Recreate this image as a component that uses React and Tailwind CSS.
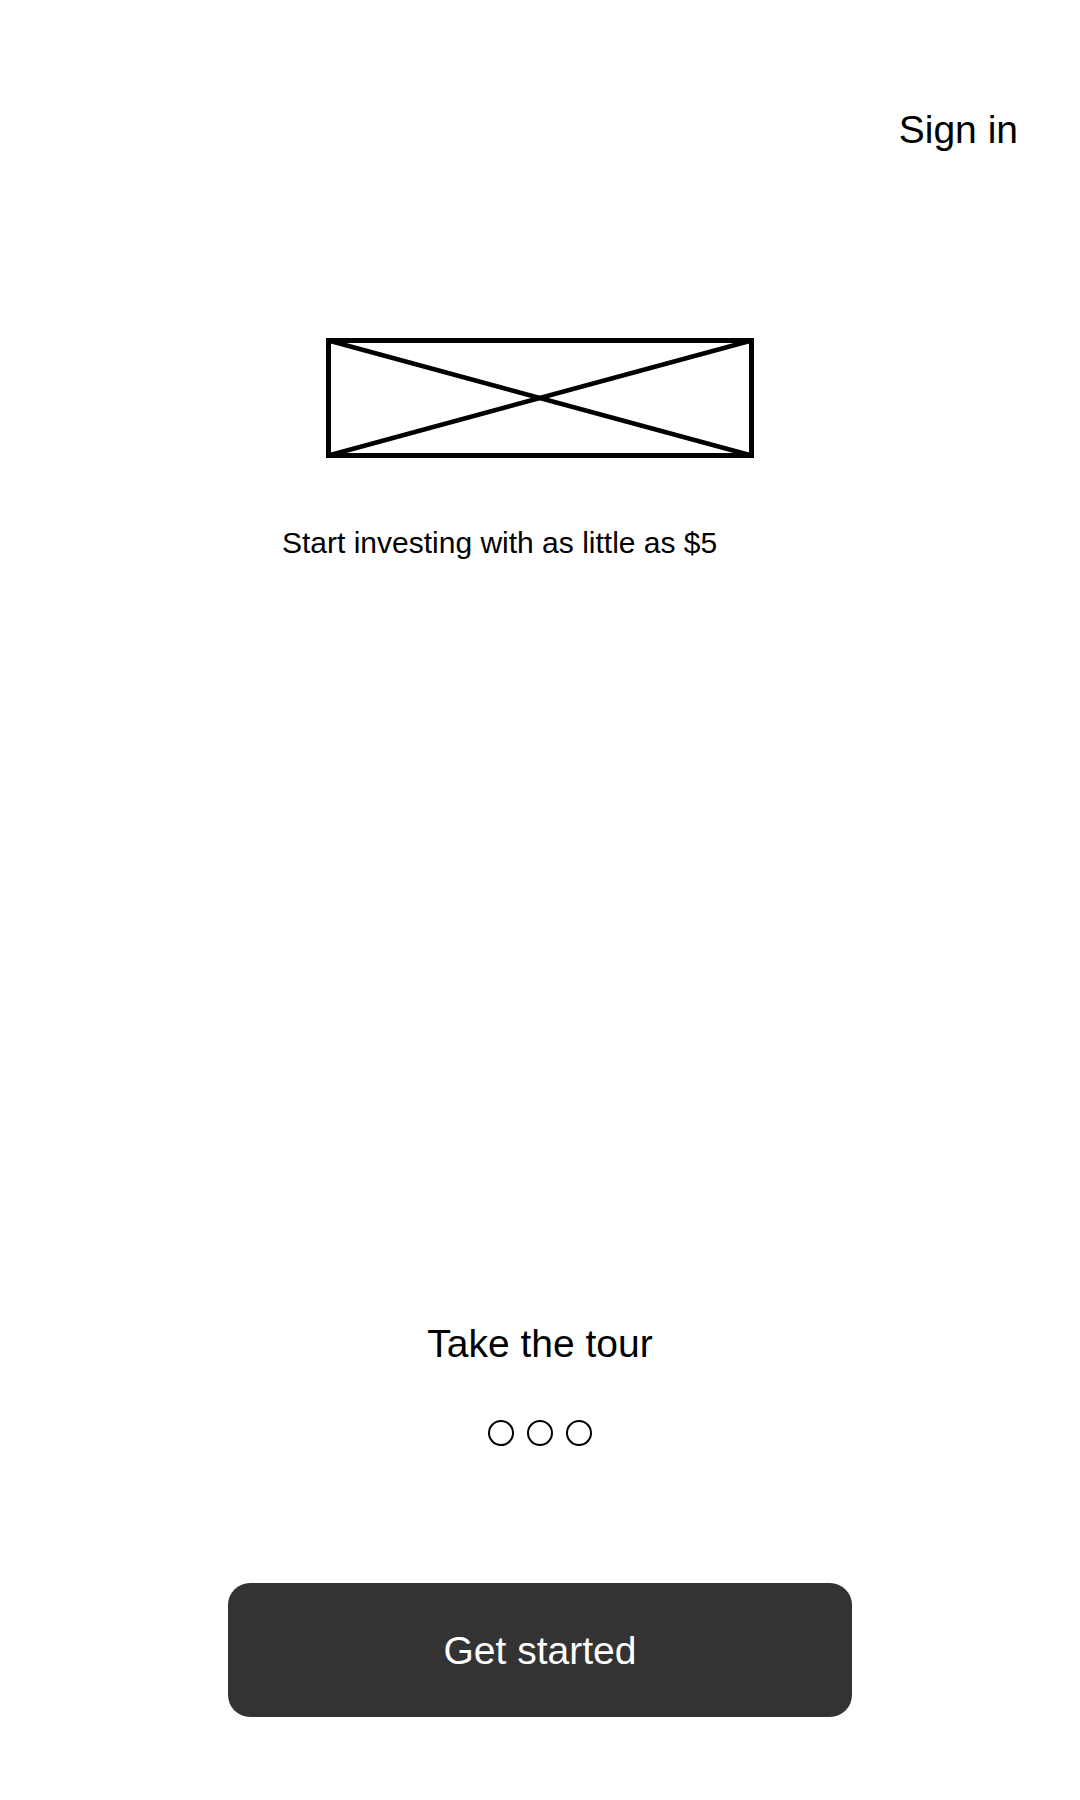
import React from 'react';

const Placeholder = () => (
  <svg width="428" height="120" viewBox="0 0 428 120" className="mx-auto mt-[189px] block">
    <rect x="2.5" y="2.5" width="423" height="115" fill="none" stroke="black" strokeWidth="5" />
    <line x1="2.5" y1="2.5" x2="425.5" y2="117.5" stroke="black" strokeWidth="4.5" />
    <line x1="2.5" y1="117.5" x2="425.5" y2="2.5" stroke="black" strokeWidth="4.5" />
  </svg>
);

const App = () => {
  return (
    <div className="w-[1080px] h-[1800px] bg-white text-black flex flex-col font-['Liberation_Sans',Arial,sans-serif]">
      {/* Header */}
      <div className="flex justify-end pt-[110px] pr-[62px]">
        <span className="text-[39px] leading-none">Sign in</span>
      </div>

      <Placeholder />

      <p className="ml-[282px] mt-[70px] text-[30px] leading-none">Start investing with as little as $5</p>

      {/* Tour */}
      <p className="mt-[766px] text-center text-[39px] leading-none">Take the tour</p>

      <div className="flex justify-center gap-[13px] mt-[57px]">
        <div className="w-[26px] h-[26px] rounded-full border-[2.5px] border-black" />
        <div className="w-[26px] h-[26px] rounded-full border-[2.5px] border-black" />
        <div className="w-[26px] h-[26px] rounded-full border-[2.5px] border-black" />
      </div>

      <button className="mx-auto mt-[137px] w-[624px] h-[134px] rounded-[22px] bg-[#333333] text-white text-[39px] leading-none flex items-center justify-center">
        Get started
      </button>
    </div>
  );
};

export default App;
